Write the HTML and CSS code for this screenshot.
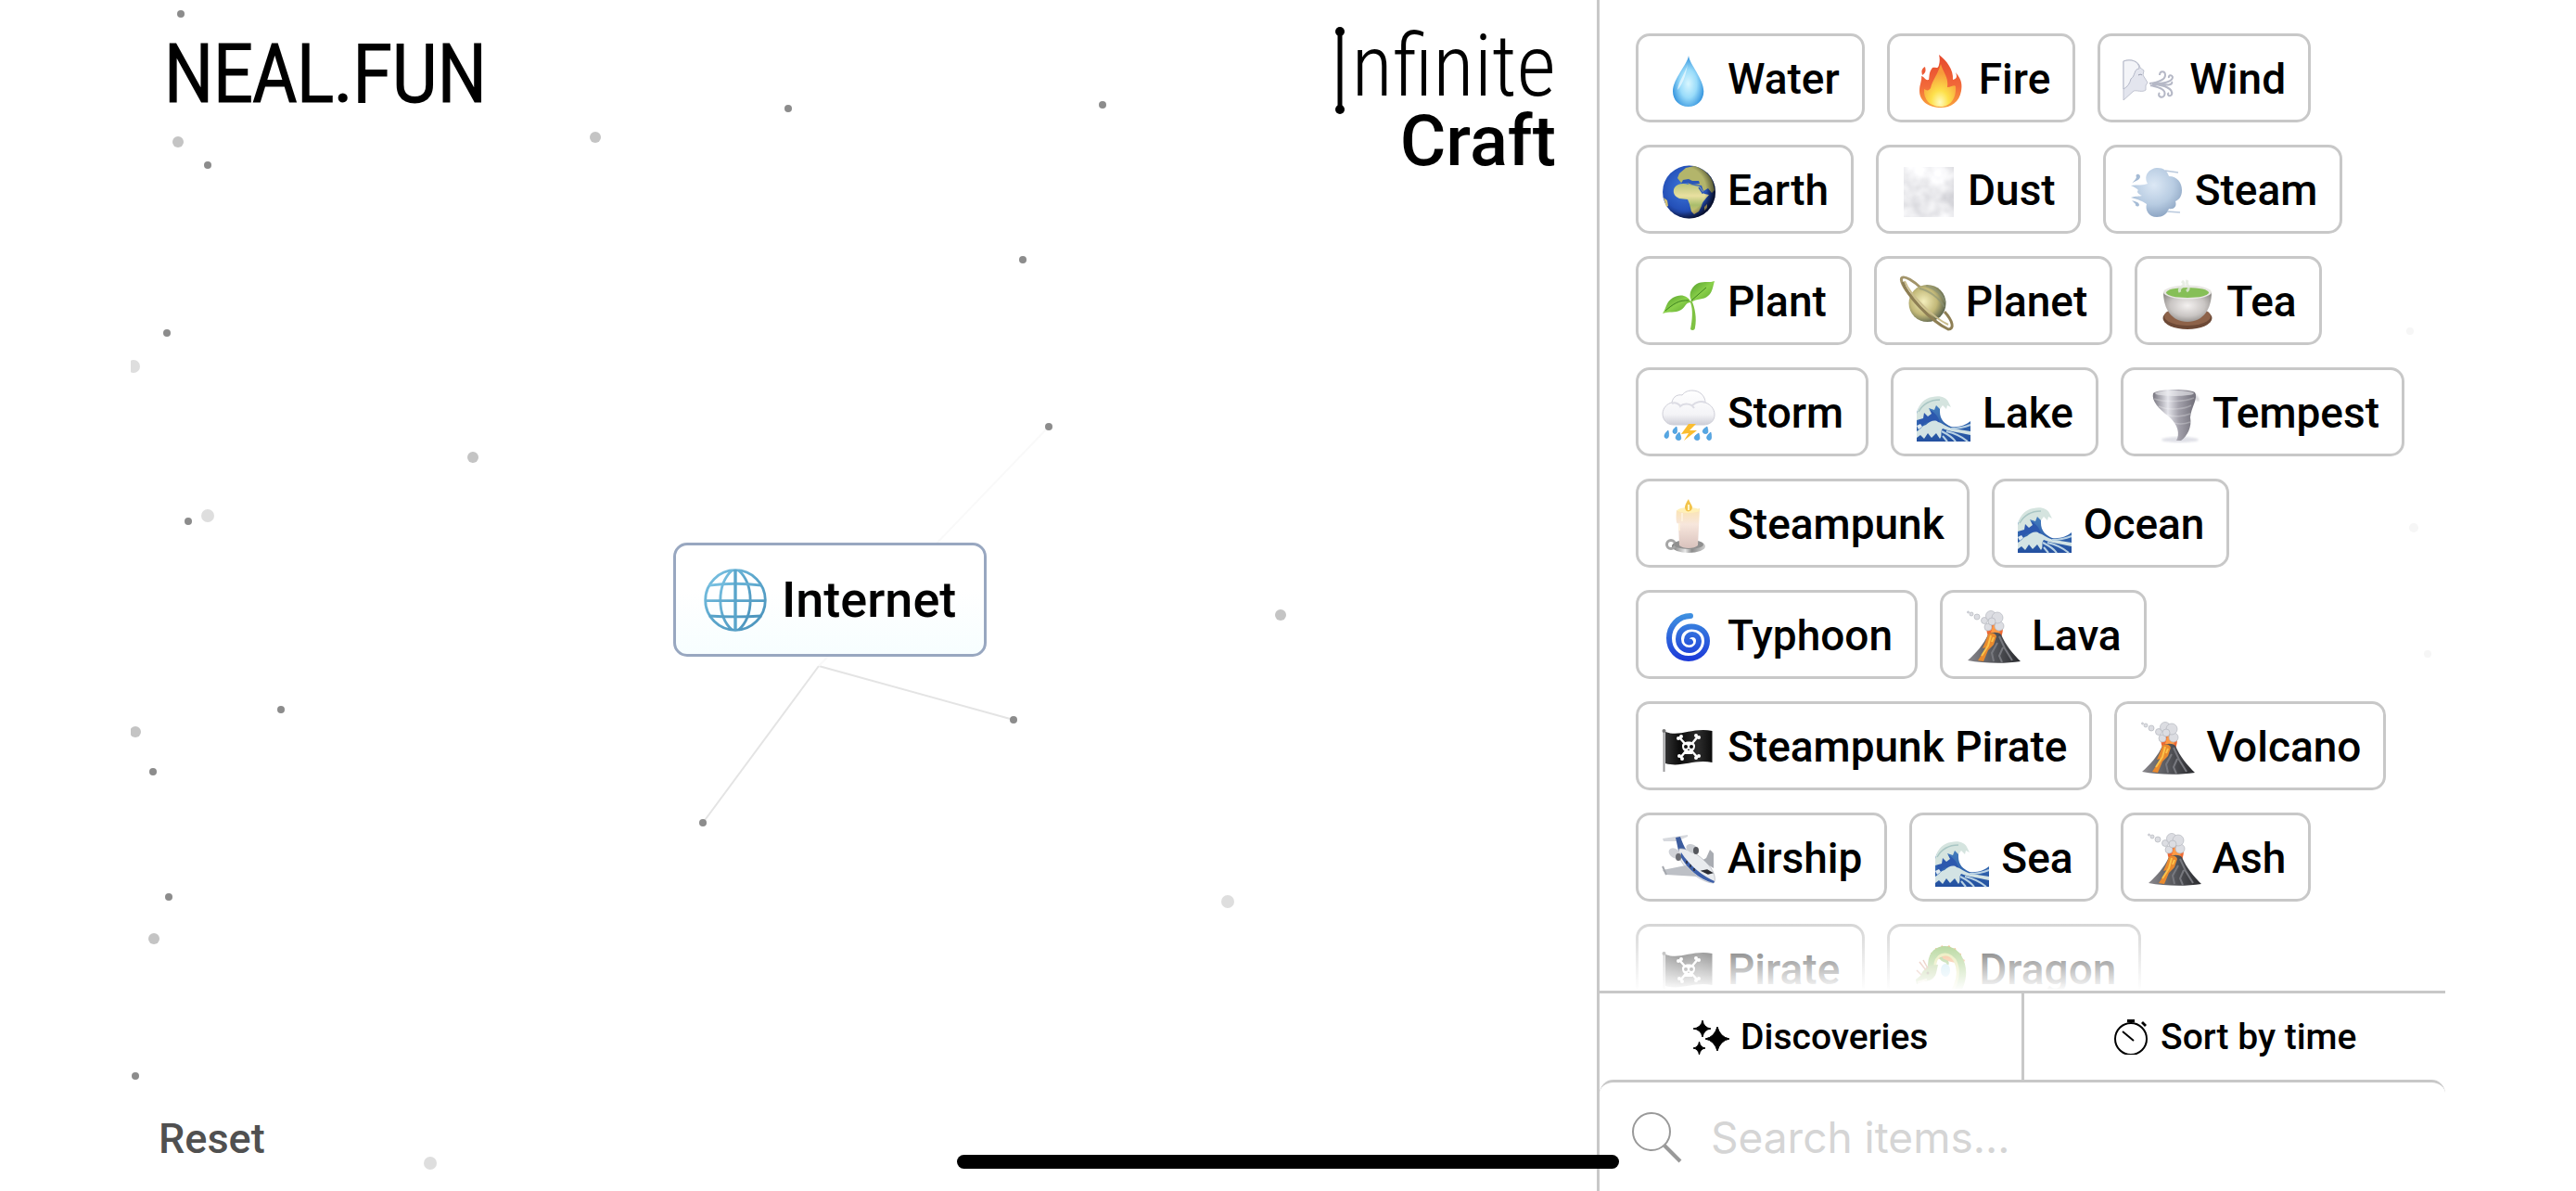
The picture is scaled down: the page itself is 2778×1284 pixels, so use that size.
FILE: index.html
```html
<!DOCTYPE html>
<html lang="en">
<head>
    <meta charset="UTF-8">
    <meta name="viewport" content="width=device-width, initial-scale=1.0">
    <title>Infinite Craft</title>
    <link rel="stylesheet" href="styles.css">
</head>
<body>
    <!-- Emoji sprites -->
    <svg class="sprites" aria-hidden="true">
        <defs>
            <radialGradient id="g-water" cx="50%" cy="55%" r="55%">
                <stop offset="0" stop-color="#d8f6ff"/><stop offset=".5" stop-color="#9adcfa"/><stop offset="1" stop-color="#2d8fdc"/>
            </radialGradient>
            <linearGradient id="g-fire" x1="0" y1="0" x2="0" y2="1">
                <stop offset="0" stop-color="#e5482c"/><stop offset=".6" stop-color="#f2693a"/><stop offset="1" stop-color="#f9a23c"/>
            </linearGradient>
            <radialGradient id="g-flame" cx="50%" cy="90%" r="70%">
                <stop offset="0" stop-color="#fffbc0"/><stop offset=".4" stop-color="#fde04b"/><stop offset="1" stop-color="#f79a3a"/>
            </radialGradient>
            <radialGradient id="g-earth" cx="42%" cy="42%" r="60%">
                <stop offset="0" stop-color="#3f78dc"/><stop offset=".7" stop-color="#2450b8"/><stop offset="1" stop-color="#122466"/>
            </radialGradient>
            <radialGradient id="g-shade" cx="38%" cy="45%" r="62%">
                <stop offset=".7" stop-color="#000" stop-opacity="0"/><stop offset="1" stop-color="#000" stop-opacity=".6"/>
            </radialGradient>
            <linearGradient id="g-land" x1="0" y1="0" x2="0" y2="1">
                <stop offset="0" stop-color="#b9c47a"/><stop offset=".4" stop-color="#e9e0a0"/><stop offset=".7" stop-color="#a9bd6c"/><stop offset="1" stop-color="#d8c070"/>
            </linearGradient>
            <radialGradient id="g-puff" cx="45%" cy="35%" r="65%">
                <stop offset="0" stop-color="#dce8f5"/><stop offset=".6" stop-color="#b8cce2"/><stop offset="1" stop-color="#8ea6c4"/>
            </radialGradient>
            <linearGradient id="g-leaf" x1="0" y1="0" x2="1" y2="1">
                <stop offset="0" stop-color="#4f9a28"/><stop offset=".5" stop-color="#8ad04a"/><stop offset="1" stop-color="#58a52c"/>
            </linearGradient>
            <radialGradient id="g-planet" cx="40%" cy="45%" r="60%">
                <stop offset="0" stop-color="#f3eebc"/><stop offset=".6" stop-color="#c2b878"/><stop offset="1" stop-color="#5e664e"/>
            </radialGradient>
            <radialGradient id="g-cup" cx="50%" cy="45%" r="60%">
                <stop offset="0" stop-color="#f4f1f0"/><stop offset=".6" stop-color="#c9c5c3"/><stop offset="1" stop-color="#8d8986"/>
            </radialGradient>
            <linearGradient id="g-cloud" x1="0" y1="0" x2="0" y2="1">
                <stop offset="0" stop-color="#fff"/><stop offset=".7" stop-color="#f4f4f7"/><stop offset="1" stop-color="#cdcdd6"/>
            </linearGradient>
            <linearGradient id="g-twister" x1="0" y1="0" x2="1" y2="0">
                <stop offset="0" stop-color="#77757f"/><stop offset=".35" stop-color="#e4e4ea"/><stop offset=".6" stop-color="#a3a1ab"/><stop offset="1" stop-color="#6f6d77"/>
            </linearGradient>
            <linearGradient id="g-wax" x1="0" y1="0" x2="0" y2="1">
                <stop offset="0" stop-color="#fbe3b0"/><stop offset=".4" stop-color="#f7e6dc"/><stop offset="1" stop-color="#d9c2bd"/>
            </linearGradient>
            <linearGradient id="g-metal" x1="0" y1="0" x2="1" y2="0">
                <stop offset="0" stop-color="#777"/><stop offset=".4" stop-color="#e8e8e8"/><stop offset=".6" stop-color="#8c8c8c"/><stop offset="1" stop-color="#cfcfcf"/>
            </linearGradient>
            <linearGradient id="g-swirl" gradientUnits="userSpaceOnUse" x1="0" y1="6" x2="0" y2="58">
                <stop offset="0" stop-color="#3f92e0"/><stop offset="1" stop-color="#1c38d8"/>
            </linearGradient>
            <linearGradient id="g-rock" x1="0" y1="0" x2="1" y2="0">
                <stop offset="0" stop-color="#8a888d"/><stop offset=".5" stop-color="#55565b"/><stop offset="1" stop-color="#28292d"/>
            </linearGradient>
            <linearGradient id="g-flag" x1="0" y1="0" x2="1" y2="0">
                <stop offset="0" stop-color="#333"/><stop offset=".3" stop-color="#0c0c0c"/><stop offset=".7" stop-color="#2c2c2c"/><stop offset="1" stop-color="#0c0c0c"/>
            </linearGradient>
            <linearGradient id="g-sea" x1="0" y1="0" x2="0" y2="1">
                <stop offset="0" stop-color="#4a86c4"/><stop offset="1" stop-color="#2350a0"/>
            </linearGradient>
            <linearGradient id="g-globe" x1="0" y1="0" x2="1" y2="1">
                <stop offset="0" stop-color="#7cc4e4"/><stop offset=".5" stop-color="#5aa5cb"/><stop offset="1" stop-color="#4a92bb"/>
            </linearGradient>
            <filter id="f-dust" x="0" y="0" width="1" height="1">
                <feTurbulence type="fractalNoise" baseFrequency=".04" numOctaves="3" seed="8"/>
                <feColorMatrix values=".7 0 0 0 .47  .7 0 0 0 .47  .65 0 0 0 .52  0 0 0 0 1"/>
            </filter>
            <filter id="f-soft"><feGaussianBlur stdDeviation="1"/></filter>
        </defs>

        <symbol id="water" viewBox="0 0 60 60" overflow="visible">
            <path d="M30 5C29 14 13 30 13 43.500C13 53 20 60 29.700 60S46.300 53 46.300 43.500C46.300 30 31 14 30 5Z" fill="url(#g-water)"/>
            <path d="M29 14C27 23 19 33 18 42C23 37 27 27 29 14Z" fill="#fff" opacity=".6"/>
        </symbol>
        <symbol id="fire" viewBox="0 0 60 60" overflow="visible">
            <path d="M29 4C37 10 45 20 44 31C48 30 49 28 47 23C54 31 54 37 53 43C51 55 42 61 31 61C18 61 8 54 8 43C8 36 11 31 10 27C14 28 14 32 18 31C19 26 18 23 22 18C25 17 28 20 29 15C30 11 30 8 29 4Z" fill="url(#g-fire)"/>
            <path d="M14 17C10 19 10 22 11 26C15 23 15 21 14 17Z" fill="#ec5a35"/>
            <path d="M31 14C33 22 40 29 38 39C43 39 45 36 47 38C48 50 42 60 31 60C19 60 12 52 13 41C16 43 18 43 20 40C22 31 27 27 31 14Z" fill="url(#g-flame)"/>
        </symbol>
        <symbol id="wind" viewBox="0 0 60 60" overflow="visible">
            <path d="M1 11C9 8 18 11 19 18L23 21L22 26L27 34L25 37L25 42C21 45 16 42 12 43L1 53Z" fill="#e3e5ee" stroke="#c0c3d0"/>
            <path d="M1 11C9 8 18 11 18 19C12 19 14 27 9 30C8 35 5 39 1 41Z" fill="#f3f4f8" stroke="#b4b8c8"/>
            <path d="M17 26C19 25 20 25 21 26" fill="none" stroke="#8d92a5"/>
            <g fill="none" stroke="#b5b8c6" stroke-width="2">
                <path d="M29 35C36 34 46 32 46 26C46 21 40 21 40 26M32 36C42 35 54 34 54 28C53 25 49 26 50 29M30 37C38 39 48 41 45 48C42 52 37 48 40 45M34 36C44 37 55 40 53 47C51 50 47 47 50 45M42 35C48 38 55 36 53 33"/>
            </g>
        </symbol>
        <symbol id="earth" viewBox="0 0 60 60" overflow="visible">
            <circle cx="30.500" cy="32" r="28.500" fill="url(#g-earth)"/>
            <path d="M18 17L20 12L27 6L36 4C45 6 53 13 56 21L58 30L55 33L51 28L46 31L44 25L37 24L31 25L27 20L22 22Z" fill="#b3b56b"/>
            <path d="M24 19L30 18L34 20L41 20L42 23L34 24L28 22L22 23Z" fill="#2a56b8"/>
            <path d="M15 27C18 23 24 22 30 24L42 26L47 34L52 35C49 39 45 42 44 47L41 53L36 56L33 53L31 45L29 40L20 39C15 37 12 32 15 27Z" fill="url(#g-land)"/>
            <path d="M47 48L50 45L50 49L47 52ZM3 38L7 41L8 47L6 48Z" fill="#d3c277"/>
            <path d="M41 27L45 33L50 31" fill="none" stroke="#2a56b8" stroke-width="1.500"/>
            <circle cx="30.500" cy="32" r="28.500" fill="url(#g-shade)"/>
        </symbol>
        <symbol id="dust" viewBox="0 0 60 60" overflow="visible">
            <rect x="3" y="5" width="54" height="54" fill="#d4d4dc" filter="url(#f-dust)"/>
        </symbol>
        <symbol id="steam" viewBox="0 0 60 60" overflow="visible">
            <path d="M3 25C10 24 17 25 21 23C16 14 23 6 32 6C38 6 42 9 44 15C53 15 58 22 58 30C58 37 55 40 51 42C53 48 49 51 44 50C42 56 37 59 31 59C22 59 18 51 20 45C16 42 11 40 3 38C8 36 12 37 15 36C10 34 9 31 11 30C9 28 6 26 3 25Z" fill="url(#g-puff)"/>
            <path d="M4 23C6 20 13 20 13 15C12 11 7 13 9 16C8 19 6 20 4 23ZM4 41C7 42 12 43 12 46C11 49 7 47 8 45Z" fill="#a5bbd5"/>
            <path d="M40 9L54 11M42 53L56 54" stroke="#b9c9dd" stroke-width="1.500"/>
        </symbol>
        <symbol id="plant" viewBox="0 0 60 60" overflow="visible">
            <path d="M32 31C35 39 34 50 32 60C34 62 37 61 37 58C39 48 37 37 33 28Z" fill="#7fc242"/>
            <path d="M33 29C29 21 34 13 41 10C47 8 53 10 58 8C56 14 56 20 51 24C46 29 39 26 33 31Z" fill="url(#g-leaf)"/>
            <path d="M33 31C28 22 20 22 13 26C6 30 6 37 2 43C9 40 15 43 22 39C27 36 26 31 33 31Z" fill="url(#g-leaf)"/>
            <path d="M33 29L49 15M30 29C20 28 13 33 5 40" fill="none" stroke="#3f8420" stroke-width="1"/>
        </symbol>
        <symbol id="planet" viewBox="0 0 60 60" overflow="visible">
            <path d="M14 25C4 15 1 6 3 4.500C6 2 16 8 24 16" fill="none" stroke="#a2946a" stroke-width="3"/>
            <circle cx="30.500" cy="32" r="20" fill="url(#g-planet)"/>
            <path d="M22 16C32 18 43 26 49 36M29 13C39 16 47 23 50 31" fill="none" stroke="#8a9277" stroke-width="2" opacity=".6"/>
            <path d="M4 9C8 23 34 51 53 60C60 60 58 51 49 41" fill="none" stroke="#8e7f55" stroke-width="3"/>
            <path d="M6 8C12 23 36 47 53 55" fill="none" stroke="#cabd8d" stroke-width="2"/>
        </symbol>
        <symbol id="tea" viewBox="0 0 60 60" overflow="visible">
            <ellipse cx="30" cy="48" rx="26.500" ry="12" fill="#6d4936"/>
            <ellipse cx="30" cy="46" rx="25" ry="10" fill="#8d6249"/>
            <path d="M4 20C4 38 13 52 30 52S56 38 56 20Z" fill="url(#g-cup)"/>
            <ellipse cx="30" cy="20" rx="26" ry="7.500" fill="#e9e7e4"/>
            <ellipse cx="30" cy="20.500" rx="23" ry="5.500" fill="#86bf57"/>
            <path d="M22 20C18 14 31 14 24 8M29 19C35 15 27 12 30 7" fill="none" stroke="#e4eadf" stroke-width="3" opacity=".8"/>
        </symbol>
        <symbol id="storm" viewBox="0 0 60 60" overflow="visible">
            <path d="M14 43C6 43 2 37 2 31C2 25 7 20 12 19C13 12 19 10 23 11C26 7 30 6 34 6C42 6 48 12 48 19C54 21 58 26 58 32C58 39 53 43 46 43Z" fill="url(#g-cloud)" stroke="#cfcfd8"/>
            <path d="M12 20C16 18 20 21 21 23C25 19 33 20 36 25M34 22C38 18 44 17 48 19" fill="none" stroke="#dcdce4" stroke-width="2"/>
            <path d="M30 42L22 53L30 52L25 60L39 49L31 49L38 42Z" fill="#fbbd2f"/>
            <g fill="#55a8e4" stroke="#2f83cc" stroke-width=".5">
                <path d="M17 45C12 48 12 52 15 52.500S18 49 17 45ZM8 49C3 53 3 57 6 57.500S9 53 8 49ZM20 51C15 55 15 59 19 59.500S22 56 20 51ZM41 52C35 55 35 59 39 59.500S42 56 41 52ZM50 45C44 48 44 52 48 52.500S51 49 50 45ZM54 51C48 55 49 59 52 59.500S55 56 54 51Z"/>
            </g>
        </symbol>
        <symbol id="wave" viewBox="0 0 60 60" overflow="visible">
            <path d="M1 30C4 20 13 12 23 14C27 17 26 24 26 29C26 37 31 42 38 45C47 46 54 43 59 39V61H1Z" fill="url(#g-sea)"/>
            <path d="M13 26C19 28 24 33 26 40L30 44C25 41 17 38 10 41L4 46L2 34Z" fill="#2c58ae"/>
            <path d="M1 31C3 20 10 14 18 13C27 11 33 14 35 18L38 24L34 22L33 26L29 22L26 26L22 22L20 27L14 25L17 31L13 34L9 30L8 36L1 38Z" fill="#d5e4df"/>
            <path d="M3 29C8 20 15 16 26 16" fill="none" stroke="#a9c6c4" stroke-width="1.500"/>
            <path d="M1 50C6 47 7 44 11 43C15 39 21 37 24 40C29 41 32 45 40 47L59 50V54C45 51 36 50 29 47C26 50 29 55 26 58L22 52L17 57L13 52L9 58L5 54L1 57Z" fill="#d3e3e4"/>
            <path d="M28 50C34 53 40 57 43 61M33 50C42 52 50 56 56 61M38 47C46 47 54 45 59 43M29 55L34 61" fill="none" stroke="#b9d2e4" stroke-width="2"/>
            <path d="M1 44L5 42L7 45L3 48Z" fill="#dfeaf0"/>
        </symbol>
        <symbol id="tornado" viewBox="0 0 60 60" overflow="visible">
            <ellipse cx="37" cy="59" rx="20" ry="3" fill="#c9cad6" opacity=".6" filter="url(#f-soft)"/>
            <path d="M8 9C14 4 46 4 53 8C57 14 49 24 48 35C50 45 45 55 38 60H33C37 53 35 43 25 34C14 26 6 17 8 9Z" fill="url(#g-twister)"/>
            <ellipse cx="31" cy="9" rx="21" ry="3" fill="#eeeef2" opacity=".6"/>
            <path d="M9 15C22 19 42 18 52 14M14 23C25 28 42 26 49 22M23 32C30 35 41 34 48 31M31 41C37 43 43 42 48 40" fill="none" stroke="#fff" opacity=".25" stroke-width="1.500"/>
            <path d="M52 10L57 17" stroke="#8d8b97" stroke-width="3" opacity=".4" filter="url(#f-soft)"/>
        </symbol>
        <symbol id="candle" viewBox="0 0 60 60" overflow="visible">
            <ellipse cx="30" cy="54" rx="18" ry="7" fill="url(#g-metal)"/>
            <circle cx="11" cy="52" r="4.500" fill="none" stroke="#a5a5a5" stroke-width="3"/>
            <ellipse cx="30" cy="52" rx="16" ry="5" fill="#8f8f8f"/>
            <path d="M17 15C24 18 35 17 42 13L40 53C36 57 24 57 20 53L19 29C17 31 16 26 17 15Z" fill="url(#g-wax)"/>
            <ellipse cx="30" cy="15" rx="12" ry="3" fill="#fff0b8"/>
            <path d="M30 3C26 9 25 12 27 15C29 18 34 16 34 12C34 9 31 7 30 3Z" fill="#f3c44c"/>
            <path d="M30 9V15" stroke="#fff6c8" stroke-width="2"/>
            <path d="M23 18V27M20 29V37" stroke="#fdf0dc" stroke-width="2"/>
        </symbol>
        <symbol id="cyclone" viewBox="0 0 60 60" overflow="visible">
            <path d="M32 9C19 9 9 20 9 33C9 46 18 55 30 55C42 55 50 46 50 36C50 26 42 20.500 33 20.500C25 20.500 19 26 19 34C19 41 24 46 31 46C37 46 41 41 41 36C41 32 38 29 34 29C31 29 28 31 28 35C28 37 30 38 32 37" fill="none" stroke="url(#g-swirl)" stroke-width="6" stroke-linecap="round"/>
        </symbol>
        <symbol id="volcano" viewBox="0 0 60 60" overflow="visible">
            <path d="M24 28C22 20 27 13 32 14C38 13 43 20 40 29L38 36H27Z" fill="#ee6a34"/>
            <path d="M28 27L31 17L35 24L38 19L37 33H29Z" fill="#ff9a45"/>
            <g fill="#dcdde2" stroke="#b5b7bf" stroke-width=".7">
                <circle cx="37" cy="20" r="5"/><circle cx="25" cy="21" r="4"/><circle cx="21" cy="14" r="3.500"/><circle cx="13" cy="10" r="3"/><circle cx="7" cy="7" r="2"/><circle cx="3.500" cy="5" r="1"/>
                <circle cx="28" cy="9" r="5.500"/><circle cx="35" cy="11" r="6"/><circle cx="29" cy="15" r="4"/>
            </g>
            <path d="M25 29C29 26 36 26 39 29C44 41 52 50 60 58C42 61 19 60 3 57C12 49 20 40 25 29Z" fill="url(#g-rock)"/>
            <path d="M25 29C29 26 33 28 34 31L31 40L25 46L20 58L14 57L23 43L19 44L22 37Z" fill="#e98a2e"/>
            <path d="M28 30L25 41L18 52M31 32L29 37" fill="none" stroke="#fbc34a" stroke-width="2"/>
            <path d="M37 31L43 44L51 57M35 38L29 49L31 58M41 43L37 52L40 59" fill="none" stroke="#77787e" stroke-width="2"/>
        </symbol>
        <symbol id="pirate" viewBox="0 0 60 60" overflow="visible">
            <path d="M3.500 13V57" stroke="#9a9a9c" stroke-width="2"/>
            <circle cx="3.500" cy="13" r="2" fill="#777"/>
            <path d="M5 14C21 20 34 9 55.500 13V47C36 43 22 53 5 48Z" fill="url(#g-flag)"/>
            <path d="M20 20L40 42M40 19L21 42" stroke="#fff" stroke-width="2.500"/>
            <g fill="#fff">
                <circle cx="19" cy="21" r="2"/><circle cx="22" cy="19" r="2"/><circle cx="38" cy="18" r="2"/><circle cx="41" cy="20" r="2"/><circle cx="20" cy="40" r="2"/><circle cx="23" cy="43" r="2"/><circle cx="38" cy="42" r="2"/><circle cx="41" cy="40" r="2"/>
                <path d="M23 29C23 23 37 23 37 29C37 33 35 34 34 35V38H26V35C25 34 23 33 23 29Z"/>
            </g>
            <circle cx="27" cy="30" r="2" fill="#111"/><circle cx="33" cy="30" r="2" fill="#111"/><path d="M30 32L29 34H31Z" fill="#111"/>
        </symbol>
        <symbol id="airplane" viewBox="0 0 60 60" overflow="visible">
            <path d="M44 33L49 30L53 21L57 25L57 41Z" fill="#a9acb2"/>
            <path d="M2 9L29 5L29 7L17 12L3 12Z" fill="#d7d9de"/>
            <path d="M16 8L21 7C23 12 25 18 28 22L22 30L19 22Z" fill="#3c5c9e"/>
            <path d="M20 20C27 19 41 25 52 38C58 45 60 54 57 57C48 57 35 49 26 39C21 33 18 27 20 20Z" fill="#e9ebee" stroke="#b0b3ba" stroke-width=".7"/>
            <path d="M21 28C29 42 41 53 57 57L58 55C46 50 31 38 22 24Z" fill="#3d5fa8"/>
            <path d="M27 38L2 43L6 48L40 50Z" fill="#bdc0c6"/><path d="M2 39L6 48" stroke="#a5a8ae" stroke-width="2"/>
            <ellipse cx="34" cy="20" rx="7" ry="4.500" fill="#c9ccd1" transform="rotate(25 34 20)"/><ellipse cx="38" cy="22" rx="3" ry="4" fill="#54565c"/>
            <ellipse cx="15" cy="25" rx="7" ry="5" fill="#d0d2d7" transform="rotate(35 15 25)"/><ellipse cx="19" cy="29" rx="3" ry="4" fill="#6a6c72"/>
            <path d="M45 44L50 43L55 46L51 47ZM28 33V36M32 37V40M36 41V44" fill="#2c2d33" stroke="#2c2d33" stroke-width="1.500"/>
        </symbol>
        <symbol id="dragon" viewBox="0 0 60 60" overflow="visible">
            <path d="M21 17L20 12L25 12L25 7L30 8L32 4L36 7L40 4L43 8L47 7L48 12L53 13L53 18L57 20L55 25" fill="#f08a3c"/>
            <path d="M22 30C18 8 40 4 49 17C58 32 53 49 43 60" fill="none" stroke="#79b548" stroke-width="9"/>
            <path d="M25 29C23 14 38 9 46 20C53 33 48 48 40 58" fill="none" stroke="#d5d977" stroke-width="3"/>
            <path d="M31 17C32 23 40 19 38 25" fill="none" stroke="#6fab40" stroke-width="3"/>
            <path d="M17 26L28 25L26 34C24 41 18 43 11 43L5 46L4 41L9 37L11 33Z" fill="#8cb255"/>
            <path d="M15 31L8 22M17 29L12 20M10 36L5 31" stroke="#c9765a" stroke-width="1.500"/>
            <path d="M6 44L16 41" stroke="#f0dfc0" stroke-width="2"/><circle cx="17" cy="34" r="1.500" fill="#5a4a20"/>
            <ellipse cx="36" cy="31" rx="5" ry="7" fill="#a9dbee"/>
            <path d="M5 58C20 53 38 53 50 59" fill="none" stroke="#79b548" stroke-width="6"/>
        </symbol>
        <symbol id="globe" viewBox="0 0 60 60" overflow="visible">
            <g fill="none" stroke="url(#g-globe)" stroke-width="2.500">
                <circle cx="30" cy="30" r="28.500"/>
                <path d="M27 1.500C12 15 12 45 27 58.500M33 1.500C48 15 48 45 33 58.500"/>
                <path d="M5 16C20 14 40 14 55 16M1 30.500H59M5 45C20 46 40 46 55 45"/>
            </g>
            <path d="M30 1V59" stroke="#5aa5cb" stroke-width="3"/>
        </symbol>
    </svg>

    <div class="game">
        <main class="board">
            <svg class="particles" aria-hidden="true">
                <g class="lines">
                    <path d="M742 718L617 887M742 718L952 776"/>
                    <path class="far" d="M742 718L990 460"/>
                </g>
                <g class="near">
                    <circle cx="54" cy="15" r="4"/><circle cx="83" cy="178" r="4"/><circle cx="709" cy="117" r="4"/>
                    <circle cx="1048" cy="113" r="4"/><circle cx="962" cy="280" r="4"/><circle cx="39" cy="359" r="4"/>
                    <circle cx="990" cy="460" r="4"/><circle cx="62" cy="562" r="4"/><circle cx="162" cy="765" r="4"/>
                    <circle cx="24" cy="832" r="4"/><circle cx="952" cy="776" r="4"/><circle cx="617" cy="887" r="4"/>
                    <circle cx="41" cy="967" r="4"/><circle cx="5" cy="1160" r="4"/>
                </g>
                <g class="mid">
                    <circle cx="501" cy="148" r="6"/><circle cx="51" cy="153" r="6"/><circle cx="369" cy="493" r="6"/>
                    <circle cx="1240" cy="663" r="6"/><circle cx="5" cy="789" r="6"/><circle cx="25" cy="1012" r="6"/>
                </g>
                <g class="away">
                    <circle cx="3" cy="395" r="7"/><circle cx="83" cy="556" r="7"/>
                    <circle cx="1183" cy="972" r="7"/><circle cx="323" cy="1254" r="7"/>
                </g>
            </svg>

            <header class="header">
                <a class="site-logo" href="#">NEAL.FUN</a>
                <h1 class="title">
                    <span class="title-top">
                        <svg class="title-i" viewBox="0 0 12 96" role="img" aria-label="I">
                            <path d="M6 6V90" stroke="#000" stroke-width="5"/>
                            <circle cx="6" cy="6" r="5"/><circle cx="6" cy="90" r="5"/>
                        </svg>nfinite</span>
                    <span class="title-bottom">Craft</span>
                </h1>
            </header>

            <button class="instance"><svg class="emoji"><use href="#globe"/></svg>Internet</button>

            <button class="reset">Reset</button>
        </main>

        <aside class="sidebar">
            <div class="items">
                <button class="item"><svg class="emoji"><use href="#water"/></svg>Water</button>
                <button class="item"><svg class="emoji"><use href="#fire"/></svg>Fire</button>
                <button class="item"><svg class="emoji"><use href="#wind"/></svg>Wind</button>
                <button class="item"><svg class="emoji"><use href="#earth"/></svg>Earth</button>
                <button class="item"><svg class="emoji"><use href="#dust"/></svg>Dust</button>
                <button class="item"><svg class="emoji"><use href="#steam"/></svg>Steam</button>
                <button class="item"><svg class="emoji"><use href="#plant"/></svg>Plant</button>
                <button class="item"><svg class="emoji"><use href="#planet"/></svg>Planet</button>
                <button class="item"><svg class="emoji"><use href="#tea"/></svg>Tea</button>
                <button class="item"><svg class="emoji"><use href="#storm"/></svg>Storm</button>
                <button class="item"><svg class="emoji"><use href="#wave"/></svg>Lake</button>
                <button class="item"><svg class="emoji"><use href="#tornado"/></svg>Tempest</button>
                <button class="item"><svg class="emoji"><use href="#candle"/></svg>Steampunk</button>
                <button class="item"><svg class="emoji"><use href="#wave"/></svg>Ocean</button>
                <button class="item"><svg class="emoji"><use href="#cyclone"/></svg>Typhoon</button>
                <button class="item"><svg class="emoji"><use href="#volcano"/></svg>Lava</button>
                <button class="item"><svg class="emoji"><use href="#pirate"/></svg>Steampunk Pirate</button>
                <button class="item"><svg class="emoji"><use href="#volcano"/></svg>Volcano</button>
                <button class="item"><svg class="emoji"><use href="#airplane"/></svg>Airship</button>
                <button class="item"><svg class="emoji"><use href="#wave"/></svg>Sea</button>
                <button class="item"><svg class="emoji"><use href="#volcano"/></svg>Ash</button>
                <button class="item"><svg class="emoji"><use href="#pirate"/></svg>Pirate</button>
                <button class="item"><svg class="emoji"><use href="#dragon"/></svg>Dragon</button>
                <svg class="sidebar-dots" aria-hidden="true">
                    <circle cx="874" cy="357" r="4"/><circle cx="878" cy="569" r="5"/><circle cx="893" cy="705" r="4"/>
                </svg>
            </div>

            <div class="controls">
                <button class="control">
                    <svg class="control-icon" viewBox="0 0 40 38" aria-hidden="true">
                        <path d="M11 1Q12.500 9 20 10Q12.500 11 11 19Q9.500 11 1 10Q9.500 9 11 1ZM27 8Q30 19 40 21Q30 23 27 34Q24 23 14 21Q24 19 27 8ZM7.500 24Q8.500 30 14 31Q8.500 32 7.500 38Q6.500 32 1 31Q6.500 30 7.500 24Z" stroke="#000" stroke-linejoin="round"/>
                    </svg>
                    Discoveries
                </button>
                <button class="control">
                    <svg class="control-icon" viewBox="0 0 40 38" aria-hidden="true">
                        <circle cx="20" cy="21" r="17" fill="none" stroke="#000" stroke-width="2"/>
                        <path d="M16 0H24V3H16ZM33 2L37 6L35 8L31 4Z"/>
                        <path d="M11 13L23 23" stroke="#000" stroke-width="2"/>
                    </svg>
                    Sort by time
                </button>
            </div>

            <label class="search">
                <svg class="search-icon" viewBox="0 0 56 56" aria-hidden="true">
                    <circle cx="22" cy="22" r="20" fill="none" stroke="#999" stroke-width="2"/>
                    <path d="M36 37L53 54" stroke="#999" stroke-width="4"/>
                </svg>
                <input class="search-input" type="text" placeholder="Search items..." aria-label="Search items">
            </label>
        </aside>
    </div>

    <div class="home-bar"></div>
</body>
</html>
```
FILE: styles.css
```css
* {
    box-sizing: border-box;
}

body {
    margin: 0;
    background: #fff;
    color: #000;
    font-family: Roboto, 'Liberation Sans', sans-serif;
    overflow: hidden;
}

button {
    margin: 0;
    background: none;
    border: none;
    color: inherit;
    font-family: inherit;
    font-weight: 500;
    cursor: pointer;
}

.sprites {
    position: absolute;
    width: 0;
    height: 0;
}

.game {
    display: flex;
    height: 100vh;
    padding: 0 141px;
}

/* Board */
.board {
    position: relative;
    flex: 1;
    display: flex;
    flex-direction: column;
    justify-content: space-between;
    align-items: flex-start;
}

.particles {
    position: absolute;
    top: 0;
    left: 0;
    width: 100%;
    height: 100%;
    pointer-events: none;
}

.lines path { fill: none; stroke: #e4e4e4; stroke-width: 2; }
.lines .far { stroke: #f9f9f9; }
.near { fill: #8c8c8c; }
.mid { fill: #c4c4c4; }
.away { fill: #dedede; }

.header {
    position: relative;
    display: flex;
    justify-content: space-between;
    align-items: flex-start;
    width: 100%;
    padding: 28px 44px 0 36px;
}

.site-logo {
    color: #000;
    font-family: 'Roboto Condensed', 'Liberation Sans Narrow', Roboto, sans-serif;
    font-size: 86px;
    font-weight: 300;
    line-height: 104px;
    text-decoration: none;
    -webkit-text-stroke: 3px #000;
}

.title {
    margin: 0;
    text-align: right;
}

.title-top,
.title-bottom {
    display: flex;
    justify-content: flex-end;
}

.title-top {
    gap: 6px;
    font-family: 'Roboto Condensed', Roboto, sans-serif;
    font-size: 92px;
    font-weight: 300;
    line-height: 88px;
}

.title-i {
    width: 12px;
    height: 96px;
}

.title-bottom {
    font-size: 76px;
    font-weight: 500;
    line-height: 56px;
}

.instance {
    position: absolute;
    top: 585px;
    left: 585px;
    display: flex;
    align-items: center;
    gap: 16px;
    height: 123px;
    padding: 0 30px;
    background: linear-gradient(#fff 40%, #f7feff);
    border: 3px solid #98a7c0;
    border-radius: 15px;
    font-size: 54px;
}

.instance .emoji {
    width: 68px;
    height: 68px;
}

.reset {
    position: relative;
    margin: 0 0 28px 30px;
    padding: 0;
    color: #505050;
    font-size: 45px;
    line-height: 56px;
}

/* Sidebar */
.sidebar {
    display: flex;
    flex-direction: column;
    width: 915px;
    border-left: 3px solid #c8c8c8;
}

.items {
    position: relative;
    flex: 1;
    display: flex;
    flex-wrap: wrap;
    align-content: flex-start;
    gap: 24px;
    min-height: 0;
    padding: 36px 24px 0 39px;
    overflow: hidden;
}

/* Fade the last row out under the controls */
.items::after {
    content: '';
    position: absolute;
    right: 0;
    bottom: 0;
    left: 0;
    height: 96px;
    background: linear-gradient(rgba(255, 255, 255, 0), #fff);
}

.item {
    display: flex;
    align-items: center;
    gap: 12px;
    height: 96px;
    padding: 2px 24px 0;
    background: #fff;
    border: 3px solid #c8c8c8;
    border-radius: 15px;
    font-size: 46px;
}

.emoji {
    flex: none;
    width: 60px;
    height: 60px;
    overflow: visible;
}

.sidebar-dots {
    position: absolute;
    top: 0;
    left: 0;
    width: 100%;
    height: 100%;
    fill: #f6f6f6;
    pointer-events: none;
}

.controls {
    display: flex;
    height: 96px;
    border-top: 3px solid #c8c8c8;
}

.control {
    flex: 1;
    display: flex;
    justify-content: center;
    align-items: center;
    gap: 12px;
    padding: 0;
    font-size: 39px;
}

.control + .control {
    border-left: 3px solid #c8c8c8;
}

.control-icon {
    width: 40px;
    height: 38px;
}

.search {
    display: flex;
    align-items: center;
    gap: 30px;
    height: 120px;
    padding: 0 24px 0 34px;
    border-top: 3px solid #c8c8c8;
    border-radius: 15px;
}

.search-icon {
    flex: none;
    width: 56px;
    height: 56px;
}

.search-input {
    flex: 1;
    min-width: 0;
    padding: 0;
    background: none;
    border: none;
    outline: none;
    color: #000;
    font-family: Inter, Roboto, sans-serif;
    font-size: 46px;
}

.search-input::placeholder {
    color: #d5d5d5;
}

.home-bar {
    position: fixed;
    bottom: 24px;
    left: 50%;
    width: 714px;
    height: 15px;
    margin-left: -357px;
    background: #000;
    border-radius: 8px;
}
```
